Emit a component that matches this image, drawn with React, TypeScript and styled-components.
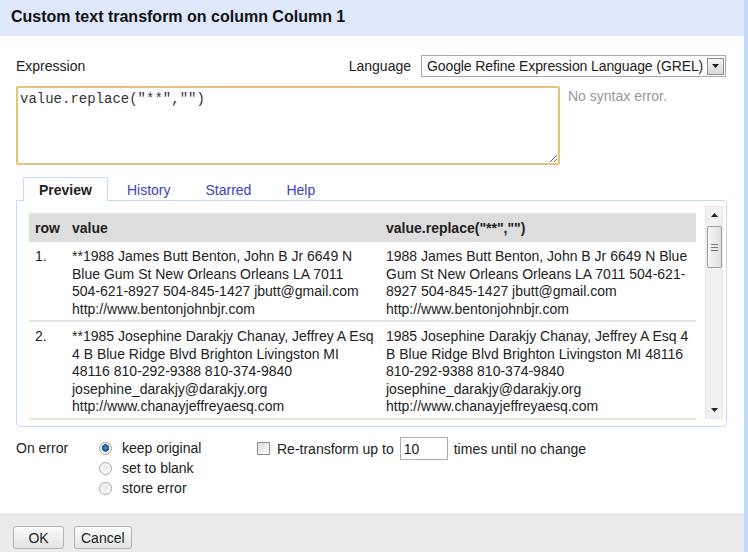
import React from "react"
import styled, { createGlobalStyle } from "styled-components"

const rows = [
  "**1988 James Butt Benton, John B Jr 6649 N Blue Gum St New Orleans Orleans LA 7011 504-621-8927 504-845-1427 jbutt@gmail.com http://www.bentonjohnbjr.com",
  "**1985 Josephine Darakjy Chanay, Jeffrey A Esq 4 B Blue Ridge Blvd Brighton Livingston MI 48116 810-292-9388 810-374-9840 josephine_darakjy@darakjy.org http://www.chanayjeffreyaesq.com"
]

const Triangle = ({ down }: { down?: boolean }) => (
  <svg width="7" height="4" viewBox="0 0 7 4">
    <path d={down ? "M0 0 H7 L3.5 4 Z" : "M0 4 H7 L3.5 0 Z"} fill="#222" />
  </svg>
)

const App = () => (
  <Page>
    <GlobalStyle />
    <Dialog>
      <TitleBar>Custom text transform on column Column 1</TitleBar>
      <Body>
        <HeaderRow>
          <Label>Expression</Label>
          <LangGroup>
            <Label>Language</Label>
            <SelectBox>
              <SelectValue>Google Refine Expression Language (GREL)</SelectValue>
              <DropButton>
                <Triangle down />
              </DropButton>
            </SelectBox>
          </LangGroup>
        </HeaderRow>

        <ExprRow>
          <ExprInput defaultValue={'value.replace("**","")'} spellCheck={false} />
          <Status>No syntax error.</Status>
        </ExprRow>

        <Tabs>
          <Tab $active>Preview</Tab>
          <Tab>History</Tab>
          <Tab>Starred</Tab>
          <Tab>Help</Tab>
        </Tabs>
        <Panel>
          <ScrollArea>
            <Viewport>
              <Table>
                <colgroup>
                  <col style={{ width: 37 }} />
                  <col style={{ width: 314 }} />
                  <col style={{ width: 316 }} />
                </colgroup>
                <thead>
                  <tr>
                    <HeadCell>row</HeadCell>
                    <HeadCell>value</HeadCell>
                    <HeadCell>value.replace("**","")</HeadCell>
                  </tr>
                </thead>
                <tbody>
                  {rows.map((value, i) => (
                    <tr key={i}>
                      <Cell>{i + 1}.</Cell>
                      <Cell>{value}</Cell>
                      <Cell>{value.replace("**", "")}</Cell>
                    </tr>
                  ))}
                </tbody>
              </Table>
            </Viewport>
            <ScrollBar>
              <ArrowBox>
                <Triangle />
              </ArrowBox>
              <Thumb>
                <Grip />
              </Thumb>
              <Track />
              <ArrowBox>
                <Triangle down />
              </ArrowBox>
            </ScrollBar>
          </ScrollArea>
        </Panel>

        <Options>
          <OnErrorLabel>On error</OnErrorLabel>
          <RadioList>
            <RadioRow>
              <Radio $checked />
              <span>keep original</span>
            </RadioRow>
            <RadioRow>
              <Radio />
              <span>set to blank</span>
            </RadioRow>
            <RadioRow>
              <Radio />
              <span>store error</span>
            </RadioRow>
          </RadioList>
          <RepeatGroup>
            <Checkbox />
            <InlineText>Re-transform up to</InlineText>
            <NumberInput defaultValue="10" />
            <InlineText>times until no change</InlineText>
          </RepeatGroup>
        </Options>
      </Body>
      <Footer>
        <Button>OK</Button>
        <Button>Cancel</Button>
      </Footer>
    </Dialog>
    <Edge />
  </Page>
)

const GlobalStyle = createGlobalStyle`
  html, body {
    margin: 0;
    padding: 0;
  }
  body {
    font-family: "Liberation Sans", Arial, sans-serif;
    font-size: 14px;
    color: #222;
    background: #fff;
  }
`

const Page = styled.div`
  width: 748px;
  height: 552px;
  display: flex;
  overflow: hidden;
`

const Dialog = styled.div`
  width: 744px;
  height: 552px;
  display: flex;
  flex-direction: column;
  background: #fff;
`

const Edge = styled.div`
  width: 4px;
  background: #c1d6fb;
`

const TitleBar = styled.div`
  height: 36px;
  box-sizing: border-box;
  padding: 0 0 3px 11px;
  display: flex;
  align-items: center;
  background: #dde8fb;
  font-size: 16px;
  font-weight: bold;
  color: #111;
`

const Body = styled.div`
  flex: 1;
  padding: 19px 17px 0 16px;
`

const HeaderRow = styled.div`
  height: 22px;
  display: flex;
  align-items: center;
  justify-content: space-between;
  padding-right: 1px;
`

const Label = styled.span`
  color: #222;
`

const LangGroup = styled.div`
  display: flex;
  align-items: center;
  gap: 10px;
`

const SelectBox = styled.div`
  width: 305px;
  height: 22px;
  box-sizing: border-box;
  border: 1px solid #a9a9a9;
  padding: 0 1px 0 5px;
  display: flex;
  align-items: center;
  justify-content: space-between;
  color: #222;
`

const SelectValue = styled.span`
  white-space: nowrap;
  letter-spacing: -0.1px;
`

const DropButton = styled.div`
  width: 17px;
  height: 17px;
  flex-shrink: 0;
  box-sizing: border-box;
  border: 1px solid #8e8e8e;
  background: linear-gradient(#f6f6f6, #d9d9d9);
  display: flex;
  align-items: center;
  justify-content: center;
`

const ExprRow = styled.div`
  display: flex;
  align-items: flex-start;
  margin-top: 9px;
`

const ExprInput = styled.textarea`
  width: 544px;
  height: 79px;
  box-sizing: border-box;
  margin: 0;
  padding: 3px 2px;
  border: 2px solid #e7c27d;
  border-radius: 2px;
  outline: none;
  resize: both;
  font-family: "Liberation Mono", "Courier New", monospace;
  font-size: 14px;
  color: #333;
`

const Status = styled.div`
  margin: 2px 0 0 8px;
  color: #999;
`

const Tabs = styled.div`
  display: flex;
  margin-top: 12px;
  padding-left: 7px;
  height: 23px;
`

const Tab = styled.div<{ $active?: boolean }>`
  position: relative;
  z-index: 1;
  height: 24px;
  box-sizing: border-box;
  padding: 0 15px;
  margin-right: 3px;
  display: flex;
  align-items: center;
  border: 1px solid ${(p) => (p.$active ? "#c3d9ff" : "transparent")};
  border-bottom: none;
  border-radius: 2px 2px 0 0;
  background: ${(p) => (p.$active ? "#fff" : "transparent")};
  font-weight: ${(p) => (p.$active ? "bold" : "normal")};
  color: ${(p) => (p.$active ? "#222" : "#4040c8")};
`

const Panel = styled.div`
  height: 227px;
  box-sizing: border-box;
  border: 1px solid #c3d9ff;
  border-radius: 0 3px 4px 4px;
  padding: 4px 3px 6px 12px;
`

const ScrollArea = styled.div`
  display: flex;
  height: 215px;
`

const Viewport = styled.div`
  flex: 1;
  overflow: hidden;
  padding-top: 8px;
`

const Table = styled.table`
  width: 667px;
  table-layout: fixed;
  border-collapse: collapse;
`

const HeadCell = styled.th`
  height: 29px;
  padding: 0 3px 0 6px;
  background: #ddd;
  text-align: left;
  vertical-align: middle;
  font-weight: bold;
  color: #222;
`

const Cell = styled.td`
  padding: 6px 5px 2px 6px;
  vertical-align: top;
  line-height: 17.5px;
  border-bottom: 2px solid #e3e3e3;
  color: #222;
`

const ScrollBar = styled.div`
  width: 18px;
  margin: 1px 0;
  box-sizing: border-box;
  background: #f1f1f1;
  border: 1px solid #e9e9e9;
  display: flex;
  flex-direction: column;
  align-items: center;
`

const ArrowBox = styled.div`
  height: 16px;
  width: 100%;
  display: flex;
  align-items: center;
  justify-content: center;
`

const Thumb = styled.div`
  margin-top: 3px;
  width: 15px;
  height: 42px;
  box-sizing: border-box;
  border: 1px solid #9c9c9c;
  border-radius: 2px;
  background: linear-gradient(90deg, #f7f7f7, #dedede);
  display: flex;
  align-items: center;
  justify-content: center;
`

const Grip = styled.div`
  width: 7px;
  height: 5px;
  border-top: 1px solid #777;
  border-bottom: 1px solid #777;
  background: linear-gradient(#777, #777) center / 100% 1px no-repeat;
`

const Track = styled.div`
  flex: 1;
`

const Options = styled.div`
  display: flex;
  margin-top: 11px;
`

const OnErrorLabel = styled.div`
  width: 83px;
  line-height: 20px;
`

const RadioList = styled.div`
  width: 158px;
  display: flex;
  flex-direction: column;
`

const RadioRow = styled.div`
  height: 20px;
  display: flex;
  align-items: center;
  gap: 10px;
`

const Radio = styled.span<{ $checked?: boolean }>`
  width: 13px;
  height: 13px;
  flex-shrink: 0;
  box-sizing: border-box;
  border-radius: 50%;
  border: 1px solid #a4a4a4;
  background: ${(p) =>
    p.$checked
      ? "radial-gradient(circle at 50% 45%, #5a9bd0 0, #1d5a8f 2.5px, #2a5f8a 3.5px, #e8e8e8 4px, #fff 6px)"
      : "radial-gradient(circle at 50% 40%, #e2e2e2 0, #f2f2f2 3px, #fff 6px)"};
`

const RepeatGroup = styled.div`
  height: 23px;
  display: flex;
  align-items: center;
  margin-top: -1px;
`

const Checkbox = styled.span`
  width: 13px;
  height: 13px;
  box-sizing: border-box;
  border: 1px solid #8f8f8f;
  background: linear-gradient(135deg, #dcdcdc, #fafafa);
  margin-right: 7px;
`

const InlineText = styled.span`
  margin-right: 6px;
`

const NumberInput = styled.input`
  width: 48px;
  height: 23px;
  box-sizing: border-box;
  margin: 0 6px 0 0;
  padding: 0 3px;
  border: 1px solid #abadb3;
  outline: none;
  font-family: "Liberation Sans", Arial, sans-serif;
  font-size: 14px;
  color: #222;
`

const Footer = styled.div`
  height: 39px;
  box-sizing: border-box;
  padding: 13px 0 0 13px;
  display: flex;
  align-items: flex-start;
  gap: 10px;
  background: #ebebeb;
`

const Button = styled.button`
  height: 23px;
  min-width: 51px;
  padding: 0 6px;
  border: 1px solid #b3b3b3;
  border-radius: 3px;
  background: linear-gradient(#fbfbfb, #e3e3e3);
  font-family: "Liberation Sans", Arial, sans-serif;
  font-size: 14px;
  color: #222;
`

export default App
